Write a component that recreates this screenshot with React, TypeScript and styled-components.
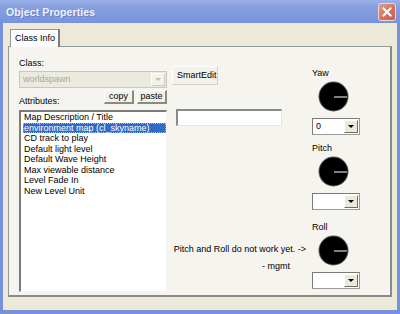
import React from "react";
import styled, { createGlobalStyle } from "styled-components";

const Global = createGlobalStyle`
  html, body { margin: 0; padding: 0; background: #ece9d8; }
  body { font-family: "Liberation Sans", Arial, sans-serif; }
  * { box-sizing: border-box; }
`;

const Window = styled.div`
  width: 400px;
  height: 314px;
  display: flex;
  flex-direction: column;
  background: #ece9d8;
  overflow: hidden;
`;

const TitleBar = styled.div`
  height: 23px;
  display: flex;
  align-items: center;
  justify-content: space-between;
  padding: 0 4px 0 6px;
  background: linear-gradient(to bottom, #9cb1e8 0%, #859fe0 30%, #7e99dd 70%, #7893da 100%);
`;

const Title = styled.span`
  color: #eef2ff;
  font-family: "Liberation Sans", Arial, sans-serif;
  font-weight: bold;
  font-size: 10.5px;
  letter-spacing: 0.1px;
  text-shadow: 1px 1px 0 #6a83c8;
`;

const CloseBtn = styled.div`
  width: 18px;
  height: 18px;
  border-radius: 3px;
  border: 1px solid #f1d6d0;
  background: linear-gradient(135deg, #e39a8c 0%, #d2705f 60%, #c45f50 100%);
  display: flex;
  align-items: center;
  justify-content: center;
`;

const Frame = styled.div`
  flex: 1;
  display: flex;
  flex-direction: column;
  border-left: 3px solid #7591d9;
  border-right: 3px solid #7591d9;
  border-bottom: 4px solid #7591d9;
  padding: 6px 5px 13px 5px;
`;

const TabStrip = styled.div`
  display: flex;
  padding-left: 2px;
  height: 17px;
`;

const Tab = styled.div`
  width: 50px;
  height: 18px;
  background: #fcfcfe;
  border: 1px solid #919b9c;
  border-bottom: none;
  border-right: 2px solid #7c7c7c;
  font-size: 9px;
  color: #000;
  padding: 3px 0 0 4px;
  position: relative;
  z-index: 1;
`;

const Panel = styled.div`
  flex: 1;
  display: flex;
  border: 1px solid #919b9c;
  border-right: 2px solid #8a8a8a;
  border-bottom: 2px solid #8a8a8a;
  background: #f5f4ee;
  padding: 9px 0 0 10px;
`;

const LeftCol = styled.div`
  width: 148px;
  display: flex;
  flex-direction: column;
`;

const Label = styled.div<{ $mt?: number }>`
  font-size: 9px;
  color: #000;
  line-height: 11px;
  margin-top: ${(p) => p.$mt ?? 0}px;
`;

const ComboBox = styled.div<{ $disabled?: boolean; $w: number }>`
  width: ${(p) => p.$w}px;
  height: 17px;
  display: flex;
  align-items: stretch;
  border: 1px solid ${(p) => (p.$disabled ? "#c9c7ba" : "#7f9db9")};
  background: ${(p) => (p.$disabled ? "#ebeade" : "#fff")};
  padding: 1px;
`;

const ComboText = styled.div<{ $disabled?: boolean }>`
  flex: 1;
  font-size: 9px;
  line-height: 13px;
  padding-left: 2px;
  color: ${(p) => (p.$disabled ? "#aca899" : "#000")};
`;

const ComboArrow = styled.div<{ $disabled?: boolean }>`
  width: 14px;
  display: flex;
  align-items: center;
  justify-content: center;
  background: ${(p) => (p.$disabled ? "#f2f1ea" : "#ece9d8")};
  border-top: 1px solid #fff;
  border-left: 1px solid #fff;
  border-right: 1px solid ${(p) => (p.$disabled ? "#d0cdc0" : "#716f64")};
  border-bottom: 1px solid ${(p) => (p.$disabled ? "#d0cdc0" : "#716f64")};
`;

const Triangle = styled.div<{ $disabled?: boolean }>`
  width: 0;
  height: 0;
  border-left: 3px solid transparent;
  border-right: 3px solid transparent;
  border-top: 3px solid ${(p) => (p.$disabled ? "#c2bfb2" : "#000")};
`;

const AttrRow = styled.div`
  display: flex;
  align-items: flex-end;
  justify-content: space-between;
  margin-top: 2px;
  height: 17px;
`;

const SmallBtnGroup = styled.div`
  display: flex;
  gap: 3px;
  align-self: flex-start;
`;

const SmallBtn = styled.div<{ $w: number }>`
  width: ${(p) => p.$w}px;
  height: 14px;
  font-size: 9px;
  line-height: 11px;
  text-align: center;
  background: #f3f2ea;
  border-top: 1px solid #fff;
  border-left: 1px solid #fff;
  border-right: 2px solid #8d8b80;
  border-bottom: 2px solid #8d8b80;
`;

const ListBox = styled.div`
  margin-top: 3px;
  width: 148px;
  height: 182px;
  background: #fff;
  border-top: 2px solid #7a7a7a;
  border-left: 2px solid #7a7a7a;
  border-right: 1px solid #f5f4ee;
  border-bottom: 1px solid #f5f4ee;
  padding: 0 0 0 2px;
`;

const ListItem = styled.div<{ $sel?: boolean }>`
  font-size: 9px;
  line-height: 10.5px;
  height: 10.5px;
  padding-left: 1px;
  white-space: nowrap;
  color: ${(p) => (p.$sel ? "#fff" : "#000")};
  background: ${(p) => (p.$sel ? "#316ac5" : "transparent")};
  outline: ${(p) => (p.$sel ? "1px dotted #9fb8e6" : "none")};
  outline-offset: -1px;
`;

const MidCol = styled.div`
  width: 134px;
  margin-left: 5px;
  display: flex;
  flex-direction: column;
`;

const SmartEditBtn = styled.div`
  width: 46px;
  height: 19px;
  margin-top: 10px;
  font-size: 9px;
  line-height: 17px;
  padding-left: 4px;
  background: #f3f2ea;
  border-top: 1px solid #fff;
  border-left: 1px solid #fff;
  border-right: 1px solid #d6d3c6;
  border-bottom: 1px solid #d6d3c6;
`;

const TextInput = styled.div`
  margin-top: 24px;
  margin-left: 4px;
  width: 106px;
  height: 17px;
  background: #fff;
  border-top: 2px solid #8a8a8a;
  border-left: 2px solid #8a8a8a;
  border-right: 1px solid #e8e6dc;
  border-bottom: 1px solid #e8e6dc;
`;

const Note = styled.div`
  margin-top: auto;
  margin-bottom: 20px;
  margin-right: 0;
  text-align: right;
  font-size: 9px;
  line-height: 17px;
  white-space: nowrap;
`;

const NoteSig = styled.div`
  padding-right: 16px;
`;

const RightCol = styled.div`
  width: 52px;
  margin-left: 4px;
  display: flex;
  flex-direction: column;
`;

const AxisGroup = styled.div<{ $mt: number }>`
  display: flex;
  flex-direction: column;
  margin-top: ${(p) => p.$mt}px;
`;

const AxisLabel = styled.div`
  font-size: 9px;
  line-height: 11px;
  padding-left: 2px;
`;

const DialWrap = styled.div`
  margin: 2px 0 6px 8px;
  width: 31px;
  height: 31px;
`;

const Dial = () => (
  <DialWrap>
    <svg width="31" height="31" viewBox="0 0 31 31">
      <circle cx="15.5" cy="15.5" r="15" fill="#5a5a5a" />
      <circle cx="15.5" cy="15.5" r="14" fill="#000" />
      <line x1="16" y1="16" x2="29" y2="16" stroke="#fff" strokeWidth="1" />
    </svg>
  </DialWrap>
);

const AxisCombo = styled(ComboBox)`
  margin-left: 2px;
  border: 1px solid #9a9a9a;
  border-top-color: #7a7a7a;
  border-left-color: #7a7a7a;
`;

const Axis: React.FC<{ label: string; value?: string; mt: number }> = ({ label, value = "", mt }) => (
  <AxisGroup $mt={mt}>
    <AxisLabel>{label}</AxisLabel>
    <Dial />
    <AxisCombo $w={48}>
      <ComboText>{value}</ComboText>
      <ComboArrow>
        <Triangle />
      </ComboArrow>
    </AxisCombo>
  </AxisGroup>
);

const items = [
  "Map Description / Title",
  "environment map (cl_skyname)",
  "CD track to play",
  "Default light level",
  "Default Wave Height",
  "Max viewable distance",
  "Level Fade In",
  "New Level Unit",
];

export default function App() {
  return (
    <Window>
      <Global />
      <TitleBar>
        <Title>Object Properties</Title>
        <CloseBtn>
          <svg width="10" height="10" viewBox="0 0 10 10">
            <path d="M1.5 1.5 L8.5 8.5 M8.5 1.5 L1.5 8.5" stroke="#fff" strokeWidth="2" strokeLinecap="square" />
          </svg>
        </CloseBtn>
      </TitleBar>
      <Frame>
        <TabStrip>
          <Tab>Class Info</Tab>
        </TabStrip>
        <Panel>
          <LeftCol>
            <Label $mt={2}>Class:</Label>
            <ComboBox $disabled $w={148} style={{ marginTop: 2 }}>
              <ComboText $disabled>worldspawn</ComboText>
              <ComboArrow $disabled>
                <Triangle $disabled />
              </ComboArrow>
            </ComboBox>
            <AttrRow>
              <Label>Attributes:</Label>
              <SmallBtnGroup>
                <SmallBtn $w={30}>copy</SmallBtn>
                <SmallBtn $w={30}>paste</SmallBtn>
              </SmallBtnGroup>
            </AttrRow>
            <ListBox>
              {items.map((t, i) => (
                <ListItem key={t} $sel={i === 1}>
                  {t}
                </ListItem>
              ))}
            </ListBox>
          </LeftCol>
          <MidCol>
            <SmartEditBtn>SmartEdit</SmartEditBtn>
            <TextInput />
            <Note>
              Pitch and Roll do not work yet. -&gt;
              <NoteSig>- mgmt</NoteSig>
            </Note>
          </MidCol>
          <RightCol>
            <Axis label="Yaw" value="0" mt={12} />
            <Axis label="Pitch" mt={8} />
            <Axis label="Roll" mt={12} />
          </RightCol>
        </Panel>
      </Frame>
    </Window>
  );
}
